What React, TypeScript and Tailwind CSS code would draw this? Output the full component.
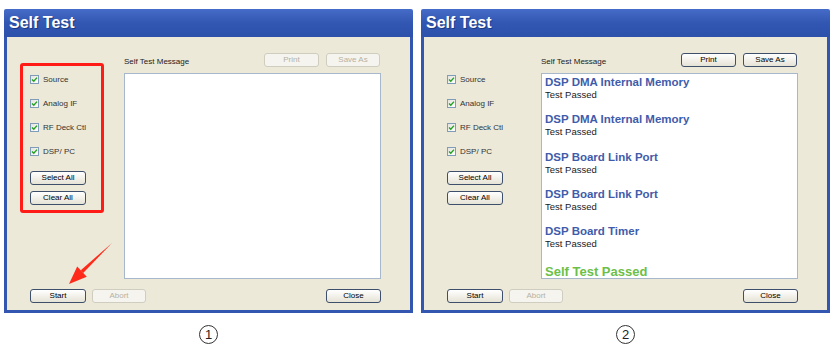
import React from "react"

/* ================= Types ================= */
type ResultItem = {
  title: string
  result: string
}

const checkItems = ["Source", "Analog IF", "RF Deck Ctl", "DSP/ PC"]

const results: ResultItem[] = [
  { title: "DSP DMA Internal Memory", result: "Test Passed" },
  { title: "DSP DMA Internal Memory", result: "Test Passed" },
  { title: "DSP Board Link Port", result: "Test Passed" },
  { title: "DSP Board Link Port", result: "Test Passed" },
  { title: "DSP Board Timer", result: "Test Passed" },
]

const font = "font-['Liberation_Sans',Arial,sans-serif]"

/* ================= Small parts ================= */
function XpButton({
  label,
  width,
  disabled,
}: {
  label: string
  width: string
  disabled?: boolean
}) {
  return (
    <button
      className={`${width} h-[14px] flex items-center justify-center rounded-[3px] border text-[8px] leading-none ${
        disabled
          ? "border-[#cfcdc0] bg-[#f5f4ee] text-[#b5b2a4]"
          : "border-[#3d4f6a] bg-linear-to-b from-white to-[#e6e3d6] text-black"
      }`}
    >
      {label}
    </button>
  )
}

function CheckBox({ label }: { label: string }) {
  return (
    <div className="flex items-center h-[9px] gap-[4px]">
      <div className="w-[9px] h-[9px] border border-[#7f9db9] bg-linear-to-br from-[#e4e3dc] to-white flex items-center justify-center">
        <svg width="7" height="7" viewBox="0 0 7 7">
          <path d="M1 3.4 L2.8 5.2 L6 1.6" stroke="#21a121" strokeWidth="1.4" fill="none" />
        </svg>
      </div>
      <span className="text-[8px] leading-none text-[#333]">{label}</span>
    </div>
  )
}

function SelfTestWindow({ done }: { done: boolean }) {
  return (
    <div className="w-[409px] h-[304px] flex flex-col">
      {/* title bar */}
      <div className="h-[28px] rounded-t-[2px] bg-linear-to-b from-[#456cc8] via-[#3157b3] to-[#2d51aa] flex items-center pl-[5px]">
        <span className="text-white font-bold text-[16px] leading-none [text-shadow:1px_1px_0_#1c3a80]">
          Self Test
        </span>
      </div>

      {/* body */}
      <div className="flex-1 border-x-[3px] border-b-[3px] border-[#3356b0] bg-[#ece9d8] flex flex-col pt-[16px] pb-[7px] pl-[13px]">
        <div className="flex items-start gap-[20px]">
          {/* left checks */}
          <div
            className={`w-[84px] mt-[10px] border-[3px] rounded-[3px] pl-[7px] pt-[9px] pb-[5px] ${
              done ? "border-transparent" : "border-[#ff1c17]"
            }`}
          >
            <div className="flex flex-col gap-[15px]">
              {checkItems.map(c => (
                <CheckBox key={c} label={c} />
              ))}
            </div>
            <div className="flex flex-col gap-[6px] mt-[15px]">
              <XpButton label="Select All" width="w-[56px]" />
              <XpButton label="Clear All" width="w-[56px]" />
            </div>
          </div>

          {/* message area */}
          <div className="w-[257px] flex flex-col">
            <div className="flex items-end h-[14px]">
              <span className="text-[8px] leading-none text-[#222] mb-[1px]">Self Test Message</span>
              <div className="ml-auto flex gap-[7px] mr-[1px]">
                <XpButton label="Print" width="w-[55px]" disabled={!done} />
                <XpButton label="Save As" width="w-[54px]" disabled={!done} />
              </div>
            </div>
            <div className="mt-[6px] h-[206px] border border-[#a8b8cc] bg-white overflow-hidden pl-[3px] pt-[2px]">
              {done && (
                <>
                  {results.map((r, i) => (
                    <div key={i} className="mb-[13.3px]">
                      <div className="text-[11.5px] leading-[13px] font-bold text-[#3f5cab]">{r.title}</div>
                      <div className="text-[9.5px] leading-[11px] text-[#1a1a1a]">{r.result}</div>
                    </div>
                  ))}
                  <div className="mt-[16px] text-[13px] leading-[13px] font-bold text-[#6cbf48]">
                    Self Test Passed
                  </div>
                </>
              )}
            </div>
          </div>
        </div>

        {/* bottom buttons */}
        <div className="mt-[10px] flex items-center pl-[10px] pr-[29px]">
          <XpButton label="Start" width="w-[56px]" />
          <div className="ml-[6px]">
            <XpButton label="Abort" width="w-[54px]" disabled />
          </div>
          <div className="ml-auto">
            <XpButton label="Close" width="w-[55px]" />
          </div>
        </div>
      </div>
    </div>
  )
}

function StepNumber({ n }: { n: string }) {
  return (
    <div className="mt-[12px] w-[19px] h-[19px] rounded-full border border-[#333] flex items-center justify-center text-[13px] leading-none text-[#222]">
      {n}
    </div>
  )
}

export default function App() {
  return (
    <div className={`relative w-[836px] h-[354px] bg-white overflow-hidden ${font}`}>
      <div className="flex gap-[8px] pt-[9px] pl-[4px]">
        <div className="flex flex-col items-center">
          <SelfTestWindow done={false} />
          <StepNumber n="1" />
        </div>
        <div className="flex flex-col items-center">
          <SelfTestWindow done={true} />
          <StepNumber n="2" />
        </div>
      </div>

      {/* red arrow pointing at Start */}
      <svg className="absolute left-0 top-0 pointer-events-none" width="836" height="354">
        <polygon points="112,243 83.2,273 80.8,270.2" fill="#ff2a1a" />
        <polygon points="69,284 77.2,266.5 86.8,276.7" fill="#ff2a1a" />
      </svg>
    </div>
  )
}
